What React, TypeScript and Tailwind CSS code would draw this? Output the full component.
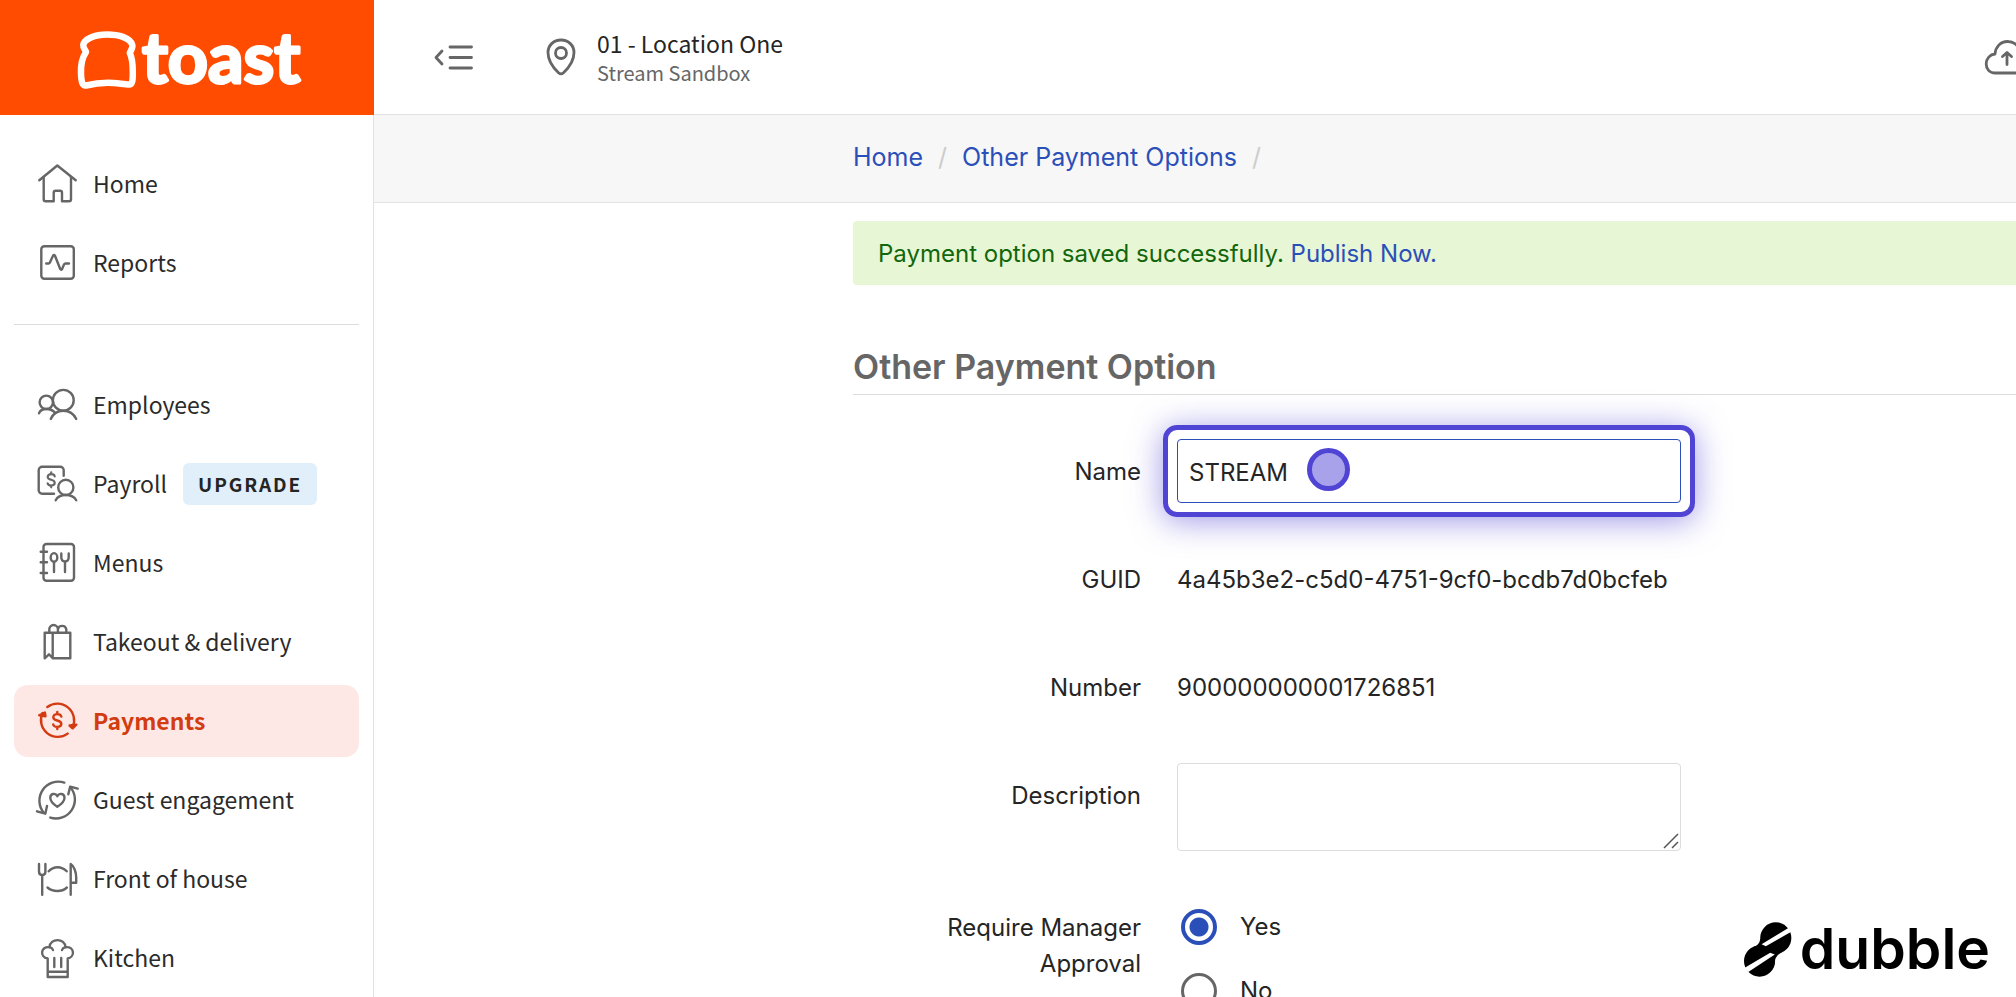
import React, { useState } from 'react';

const sourceSans = "font-['Noto_Sans_CJK_SC','Noto_Sans',sans-serif]";

function Icon({ children }: { children: React.ReactNode }) {
  return (
    <svg
      viewBox="0 0 40 40"
      className="h-10 w-10 shrink-0 overflow-visible"
      fill="none"
      stroke="currentColor"
      strokeWidth="2.4"
      strokeLinecap="round"
      strokeLinejoin="round"
      aria-hidden="true"
    >
      {children}
    </svg>
  );
}

const dollar =
  'M4 -3.9C3.7 -5.6 2.1 -6.4 0 -6.4C-2.4 -6.4 -4 -5.2 -4 -3.3C-4 -1.2 -2.2 -.6 0 0C2.2 .6 4 1.3 4 3.3C4 5.2 2.4 6.4 0 6.4C-2.2 6.4 -3.8 5.6 -4.1 3.9M0 -8.6V-6.4M0 6.4V8.6';

const icons = {
  home: (
    <Icon>
      <path d="M2.3 16.3 20.3 1.5 38.7 16.3" />
      <path d="M6.7 13V35.3a2 2 0 0 0 2 2H16.7V28.7a2 2 0 0 1 2-2H23a2 2 0 0 1 2 2V37.3H32a2 2 0 0 0 2-2V13" />
    </Icon>
  ),
  reports: (
    <Icon>
      <rect x="4.3" y="3.3" width="32.5" height="32.5" rx="3" />
      <path d="M9.2 20.5H11.5a1.5 1.5 0 0 0 1.3-.8L16 12.8q1-1.6 2 0L23.2 26q.9 1.6 1.9 0L27 21.6q.5-1.1 1.6-1.1H32" />
    </Icon>
  ),
  employees: (
    <Icon>
      <circle cx="26.3" cy="15.3" r="10.4" />
      <path d="M13.8 34C16 28.6 20.8 25.7 26.3 25.7S36.7 28.6 39.2 34" />
      <circle cx="9.3" cy="17.3" r="6.7" />
      <path d="M2 28.3C3 25.5 5.8 24 9.3 24C13 24 16.2 25.3 18.2 28" />
    </Icon>
  ),
  payroll: (
    <Icon>
      <path d="M26.7 11.7V6.2a3.5 3.5 0 0 0-3.5-3.5H5.2a3.5 3.5 0 0 0-3.5 3.5v20a3.5 3.5 0 0 0 3.5 3.5H17" />
      <path transform="translate(14.2 15.8) scale(.88)" d={dollar} />
      <circle cx="28.8" cy="23.4" r="7.6" />
      <path d="M18.7 36.3C20.4 32.8 24 31 28.8 31S37.4 32.8 39.2 36.3" />
    </Icon>
  ),
  menus: (
    <Icon>
      <rect x="6.5" y="1" width="30.5" height="36.7" rx="3" />
      <path d="M3.7 8.7H10M3.7 19.3H10M3.7 30H10" />
      <ellipse cx="17" cy="14.4" rx="3.3" ry="4.3" />
      <path d="M17 18.7V29M24.3 10.5V14C24.3 17 26 18.5 28 18.5S31.7 17 31.7 14V10.5M28 18.5V29" />
    </Icon>
  ),
  takeout: (
    <Icon>
      <path d="M15.7 10.7H7.7V36.3L12 32.3 15.7 36.3H33.3V10.7H15.7V36.3" />
      <path d="M12.3 10.7V7.3a4.3 4.3 0 0 1 8.6 0V10.7M20.9 7.3a4.3 4.3 0 0 1 8.4 0V10.7" />
    </Icon>
  ),
  payments: (
    <Icon>
      <path d="M10.3 6A16.8 16.8 0 0 1 35.7 26.3M30.7 32.6A16.8 16.8 0 0 1 5.5 12" />
      <path d="M32.6 24.5 35.6 27.3 39.3 23.6ZM2.2 14.3 7.9 11.5 8.5 15.3Z" fill="currentColor" />
      <path transform="translate(20.3 19.5)" d={dollar} />
    </Icon>
  ),
  guest: (
    <Icon>
      <path d="M27.3 2.6A19 19 0 0 0 6.8 32.8M13.3 37.6A19 19 0 0 0 33.6 7.4" />
      <path d="M0 31.3 8.3 33.7 10 26M31.3 14.3 33.2 6.6 40.7 8.6" />
      <path d="M20.3 26.8C17.5 25 13.3 21.5 13.3 17.8C13.3 13.5 18.5 12.5 20.3 16.2C22.1 12.5 27.5 13.5 27.5 17.8C27.5 21.5 23.2 25 20.3 26.8Z" />
    </Icon>
  ),
  front: (
    <Icon>
      <path d="M2 5V12.5Q2 16 5.2 16T8.4 12.5V5M5.2 16V35.7" />
      <path d="M11.7 12.3C16.5 6.8 24.5 6.8 29.7 12.3M10.5 28.5C16 33.2 24.7 33.2 29.9 28.5" />
      <path d="M33.7 35.7V5C37 7 39.2 13 39.2 18.5V23.8H33.7" />
    </Icon>
  ),
  kitchen: (
    <Icon>
      <path d="M10.7 39V20.5C2.5 19 3.5 8 12.5 9.2C12.8 -.2 28.2 -.2 28.5 9.2C37.5 8 38.5 19 30.7 20.5V39ZM10.7 33.7H30.7" />
      <path d="M12.5 9.2Q15.3 9.8 16 12M28.5 9.2Q25.7 9.8 25 12M17.3 20V29M24.2 20V29" />
    </Icon>
  ),
};

type NavEntry = { label: string; icon: React.ReactNode; badge?: string; active?: boolean };

const topNav: NavEntry[] = [
  { label: 'Home', icon: icons.home },
  { label: 'Reports', icon: icons.reports },
];

const mainNav: NavEntry[] = [
  { label: 'Employees', icon: icons.employees },
  { label: 'Payroll', icon: icons.payroll, badge: 'UPGRADE' },
  { label: 'Menus', icon: icons.menus },
  { label: 'Takeout & delivery', icon: icons.takeout },
  { label: 'Payments', icon: icons.payments, active: true },
  { label: 'Guest engagement', icon: icons.guest },
  { label: 'Front of house', icon: icons.front },
  { label: 'Kitchen', icon: icons.kitchen },
];

function NavList({ items }: { items: NavEntry[] }) {
  return (
    <ul className="flex flex-col gap-[7px]">
      {items.map((item) => (
        <li key={item.label}>
          <a
            href="#"
            aria-current={item.active ? 'page' : undefined}
            className={
              item.active
                ? 'flex h-[72px] items-center gap-4 rounded-[14px] bg-[#fde8e6] pl-[23px] font-bold text-[#d23c10]'
                : 'flex h-[72px] items-center gap-4 rounded-[14px] pl-[23px] text-[#666]'
            }
          >
            {item.icon}
            <span className={item.active ? 'pb-0.5' : 'pb-0.5 text-[#2b2b2b]'}>{item.label}</span>
            {item.badge && (
              <span className="flex h-[42px] items-center rounded-md bg-[#e1effa] px-[15px] text-[19px] font-bold tracking-widest text-[#252525]">
                {item.badge}
              </span>
            )}
          </a>
        </li>
      ))}
    </ul>
  );
}

function ToastLogo() {
  return (
    <svg viewBox="0 0 374 115" className="block h-[115px] w-full" role="img" aria-label="toast">
      <path
        d="M107 34.5C95 34.5 84 39 83.3 45C83 48.5 85.5 50 86 52C82 58 80.7 65 81 73C81.2 82 82.5 86 86 85.5C92 84 100 82.8 108 82.8C116 82.8 124 84.5 129 84.5C132.5 84.5 132.8 80 132.8 73C132.8 65 132.5 58 129.8 53C131 50 133 48 132.3 45C130.5 38 119 34.5 107 34.5Z"
        fill="none"
        stroke="#fff"
        strokeWidth="6.5"
        strokeLinejoin="round"
      />
      <text
        x="142"
        y="83"
        fontSize="70"
        fill="#fff"
        stroke="#fff"
        strokeWidth="3"
        strokeLinejoin="round"
        className="font-['Lato',sans-serif] font-bold"
      >
        toast
      </text>
    </svg>
  );
}

function DubbleMark() {
  return (
    <div className="pointer-events-none fixed right-[26px] bottom-5 flex items-center gap-2 text-black">
      <svg viewBox="75 125 145 166" className="h-[55px] w-12" aria-hidden="true">
        <circle cx="171" cy="173" r="47" />
        <circle cx="122" cy="243" r="47" />
        <path d="M124 176Q122 194 104 200L122 243 166 258Q166 228 188 217L171 173Z" />
        <path d="M128 192 141 198 219 154 209 143ZM76 264 88 276 168 223 154 218Z" fill="#fff" />
      </svg>
      <span className="font-['Inter',sans-serif] text-[57px] leading-[56px] font-semibold">dubble</span>
    </div>
  );
}

function Row({ label, htmlFor, children }: { label: string; htmlFor?: string; children: React.ReactNode }) {
  return (
    <div className="grid grid-cols-[288px_504px] gap-9">
      {htmlFor ? (
        <label htmlFor={htmlFor} className="pt-[15px] text-right leading-9">
          {label}
        </label>
      ) : (
        <div className="pt-[15px] text-right leading-9">{label}</div>
      )}
      {children}
    </div>
  );
}

export default function App() {
  const [name, setName] = useState('STREAM');
  const [approval, setApproval] = useState('Yes');

  return (
    <div className="flex h-screen overflow-hidden bg-white font-['Inter',sans-serif] text-2xl text-[#252525]">
      {/* Sidebar */}
      <aside className={`flex w-[374px] shrink-0 flex-col overflow-hidden text-[23px] leading-8 ${sourceSans}`}>
        <div className="shrink-0 bg-[#ff4c00]">
          <ToastLogo />
        </div>
        <nav className="flex-1 border-r border-[#e2e2e2] px-[14px] pt-[33px]">
          <NavList items={topNav} />
          <hr className="mt-[25px] mb-11 border-[#dcdcdc]" />
          <NavList items={mainNav} />
        </nav>
      </aside>

      <div className="flex min-w-0 flex-1 flex-col">
        {/* Location bar */}
        <header className={`flex h-[115px] shrink-0 items-center overflow-hidden border-b border-[#e2e2e2] pl-[59px] text-[#666] ${sourceSans}`}>
          <button type="button" aria-label="Collapse menu">
            <svg viewBox="0 0 42 30" className="h-[30px] w-[42px]" fill="none" stroke="currentColor" strokeWidth="2.8" strokeLinecap="round" strokeLinejoin="round">
              <path d="M9 9 3 15.5 9 22M17 5H38.5M17 15.5H38.5M17 26H38.5" />
            </svg>
          </button>
          <svg viewBox="0 0 30 38" className="ml-[71px] h-[38px] w-[30px]" fill="none" stroke="currentColor" strokeWidth="2.8" aria-hidden="true">
            <path d="M15 2C7.5 2 2 7.5 2 14.5C2 22 7.5 30 12.5 34.8Q15 37 17.5 34.8C22.5 30 28 22 28 14.5C28 7.5 22.5 2 15 2Z" />
            <circle cx="15" cy="15" r="5.5" />
          </svg>
          <div className="ml-[21px]">
            <div className="text-[23px] leading-8 text-[#252525]">01 - Location One</div>
            <div className="text-xl leading-7">Stream Sandbox</div>
          </div>
          <button type="button" aria-label="Publish" className="-mr-3 ml-auto">
            <svg viewBox="0 0 44 36" className="h-9 w-11" fill="none" stroke="currentColor" strokeWidth="2.8" strokeLinecap="round" strokeLinejoin="round">
              <path d="M11 34C5.5 34 2.2 30 2.2 25C2.2 19.5 6 15.5 11 15C11.5 8 16.5 2.5 23.5 2.5C30 2.5 34.5 6.5 35.5 12.5C39.5 13.5 42 18 42 23C42 29.5 38.5 34 33 34Z" />
              <path d="M23 25.5V14M18.5 17.5 23 13.5 27.5 17.5" />
            </svg>
          </button>
        </header>

        {/* Breadcrumb */}
        <nav aria-label="Breadcrumb" className="flex h-22 shrink-0 items-center gap-[15px] border-b border-[#e2e2e2] bg-[#f7f7f7] pb-0.5 pl-[479px] text-[25px] text-[#2b4fb9]">
          <a href="#">Home</a>
          <span className="text-[#ccc]">/</span>
          <a href="#">Other Payment Options</a>
          <span className="text-[#ccc]">/</span>
        </nav>

        <main className="pt-[18px] pl-[479px]">
          <div role="status" className="flex h-16 items-center rounded-l bg-[#e7f6d4] pt-0.5 pl-[25px] text-[#12660b]">
            <p>
              Payment option saved successfully.{' '}
              <a href="#" className="text-[#2b4fb9]">Publish Now.</a>
            </p>
          </div>

          <h1 className="mt-[62px] border-b border-[#dcdcdc] pb-[7px] text-[34px] leading-10 font-semibold text-[#666]">
            Other Payment Option
          </h1>

          <form className="mt-11 flex flex-col gap-11">
            <Row label="Name" htmlFor="name">
              <div className="relative">
                <input
                  id="name"
                  value={name}
                  onChange={(e) => setName(e.target.value)}
                  className="h-16 w-full rounded border border-[#2b4fb9] pt-0.5 pl-[11px] outline-none"
                />
                {/* Highlighted step target and click marker */}
                <div className="pointer-events-none absolute -inset-[14px] rounded-[14px] border-5 border-[#5044d4] shadow-[0_4px_32px_rgba(80,68,212,0.55)]" />
                <div className="pointer-events-none absolute top-[9px] left-[130px] h-[43px] w-[43px] rounded-full border-5 border-[#5044d4] bg-[#a8a2ea]" />
              </div>
            </Row>
            <Row label="GUID">
              <div className="pt-[15px] pb-[13px] leading-9">4a45b3e2-c5d0-4751-9cf0-bcdb7d0bcfeb</div>
            </Row>
            <Row label="Number">
              <div className="pt-[15px] pb-[13px] leading-9">900000000001726851</div>
            </Row>
            <Row label="Description" htmlFor="description">
              <div className="relative h-22">
                <textarea id="description" className="block h-full w-full resize-none rounded border border-[#dcdcdc] p-3 outline-none" />
                <svg viewBox="0 0 16 16" className="pointer-events-none absolute right-0.5 bottom-0.5 h-4 w-4" stroke="#555" strokeWidth="1.5" aria-hidden="true">
                  <path d="M1 15 15 1M9 15 15 9" />
                </svg>
              </div>
            </Row>
            <Row label="Require Manager Approval">
              <div>
                {['Yes', 'No'].map((option) => (
                  <label key={option} className="flex h-16 items-center gap-[23px] pl-1">
                    <input
                      type="radio"
                      name="approval"
                      checked={approval === option}
                      onChange={() => setApproval(option)}
                      className="h-9 w-9 appearance-none rounded-full border-3 border-[#666] bg-white checked:border-4 checked:border-[#2b4fb9] checked:bg-[radial-gradient(circle,#2b4fb9_9px,transparent_10px)]"
                    />
                    {option}
                  </label>
                ))}
              </div>
            </Row>
          </form>
        </main>
      </div>

      <DubbleMark />
    </div>
  );
}
